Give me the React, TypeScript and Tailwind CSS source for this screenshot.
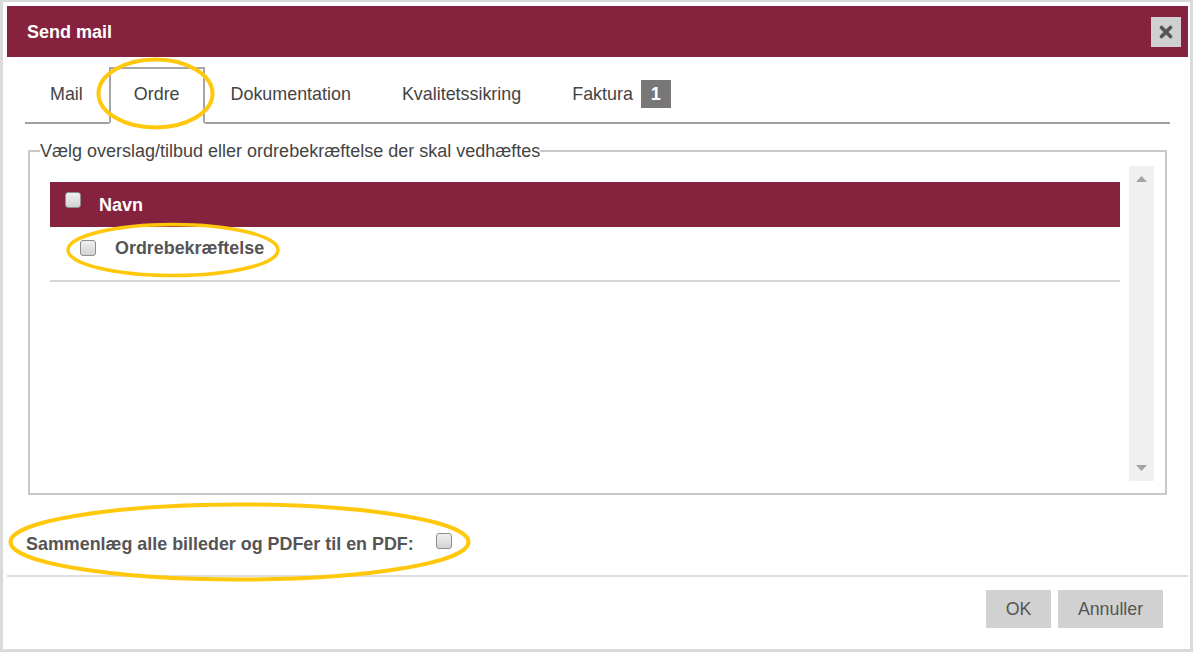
import React from "react";

function Check({ className = "" }: { className?: string }) {
  return (
    <span
      className={`block h-[16px] w-[16px] shrink-0 rounded-[3px] border border-[#8e8e8e] bg-linear-to-b from-[#f0f0f0] to-[#d3d3d3] ${className}`}
    />
  );
}

function Tab({ label, active, badge }: { label: string; active?: boolean; badge?: string }) {
  return (
    <div
      className={
        active
          ? "-mb-[2px] mr-[1px] flex h-[57px] items-center border-2 border-[#a6a6a6] border-b-white bg-white px-[23px] pb-[4px]"
          : "-mb-[2px] mr-[1px] flex h-[57px] items-center border-2 border-transparent px-[23px] pb-[4px]"
      }
    >
      <span className="text-[17.9px] leading-[20px] text-[#444]">{label}</span>
      {badge && (
        <span className="ml-[8px] mt-[1px] flex h-[28px] w-[30px] items-center justify-center bg-[#777] text-[18px] font-bold text-white">
          {badge}
        </span>
      )}
    </div>
  );
}

export default function App() {
  return (
    <div className="relative h-[654px] w-[1195px] bg-white font-['Liberation_Sans','Arial',sans-serif]">
      <div className="flex h-[652px] w-[1193px] flex-col border-[3px] border-t-2 border-[#dadada] bg-white pl-[4px] pr-[2px] pt-[4px]">
        {/* Header */}
        <div className="flex h-[51px] shrink-0 items-center justify-between bg-[#85233f] pl-[20px] pr-[7px]">
          <span className="text-[18px] font-bold leading-[20px] text-white">Send mail</span>
          <button className="flex h-[30px] w-[30px] items-center justify-center bg-[#d0d0d0]">
            <svg width="14" height="14" viewBox="0 0 14 14">
              <path d="M2.5 2.5 L11.5 11.5 M11.5 2.5 L2.5 11.5" stroke="#565656" strokeWidth="3.6" strokeLinecap="round" />
            </svg>
          </button>
        </div>

        {/* Tabs */}
        <div className="mx-[18px] mt-[10px] flex items-end border-b-2 border-[#a0a0a0]">
          <Tab label="Mail" />
          <Tab label="Ordre" active />
          <Tab label="Dokumentation" />
          <Tab label="Kvalitetssikring" />
          <Tab label="Faktura" badge="1" />
        </div>

        {/* Fieldset */}
        <fieldset className="mx-[21px] mt-[17px] h-[354px] border-2 border-[#c8c8c8]">
          <legend className="ml-[10px] text-[18px] leading-[20px] text-[#444]">
            Vælg overslag/tilbud eller ordrebekræftelse der skal vedhæftes
          </legend>
          <div className="mr-[11px] mt-[5px] flex h-[315px]">
            <div className="flex-1 pl-[20px] pr-[9px] pt-[16px]">
              <div className="flex h-[45px] bg-[#85233f] pl-[15px]">
                <div className="pt-[10px]">
                  <Check />
                </div>
                <span className="ml-[18px] self-center text-[18px] font-bold leading-[20px] text-white">Navn</span>
              </div>
              <div className="flex h-[55px] border-b-2 border-[#d6d6d6] pl-[30px] pt-[11px]">
                <div className="flex h-[20px] items-center">
                  <Check />
                  <span className="ml-[19px] text-[17.9px] font-bold leading-[20px] text-[#555]">Ordrebekræftelse</span>
                </div>
              </div>
            </div>
            <div className="flex w-[25px] flex-col items-center justify-between bg-[#f0f0f0] py-[10px]">
              <svg width="11" height="6" viewBox="0 0 11 6">
                <path d="M0 6 L5.5 0 L11 6 Z" fill="#a3a3a3" />
              </svg>
              <svg width="11" height="6" viewBox="0 0 11 6">
                <path d="M0 0 L11 0 L5.5 6 Z" fill="#a3a3a3" />
              </svg>
            </div>
          </div>
        </fieldset>

        {/* Merge option */}
        <div className="flex h-[80px] shrink-0 items-start pl-[19px] pt-[39px]">
          <div className="flex h-[20px] items-center">
            <span className="text-[17.9px] font-bold leading-[20px] text-[#555]">
              Sammenlæg alle billeder og PDFer til en PDF:
            </span>
            <Check className="mb-[6px] ml-[22px]" />
          </div>
        </div>

        {/* Footer */}
        <div className="flex flex-1 justify-end gap-[7px] border-t-2 border-[#dedede] pr-[25px] pt-[13px]">
          <button className="h-[38px] w-[65px] bg-[#d1d1d1] text-[17.8px] text-[#555]">OK</button>
          <button className="h-[38px] w-[105px] bg-[#d1d1d1] text-[17.8px] text-[#555]">Annuller</button>
        </div>
      </div>

      {/* Yellow annotation ellipses */}
      <svg className="pointer-events-none absolute inset-0" width="1195" height="654" viewBox="0 0 1195 654">
        <ellipse cx="155.5" cy="93.5" rx="57" ry="34" fill="none" stroke="#ffc80c" strokeWidth="4" />
        <ellipse cx="173" cy="250" rx="105" ry="25.5" fill="none" stroke="#ffc80c" strokeWidth="3.5" />
        <ellipse cx="239.5" cy="542" rx="229" ry="37.5" fill="none" stroke="#ffc80c" strokeWidth="4" />
      </svg>
    </div>
  );
}
